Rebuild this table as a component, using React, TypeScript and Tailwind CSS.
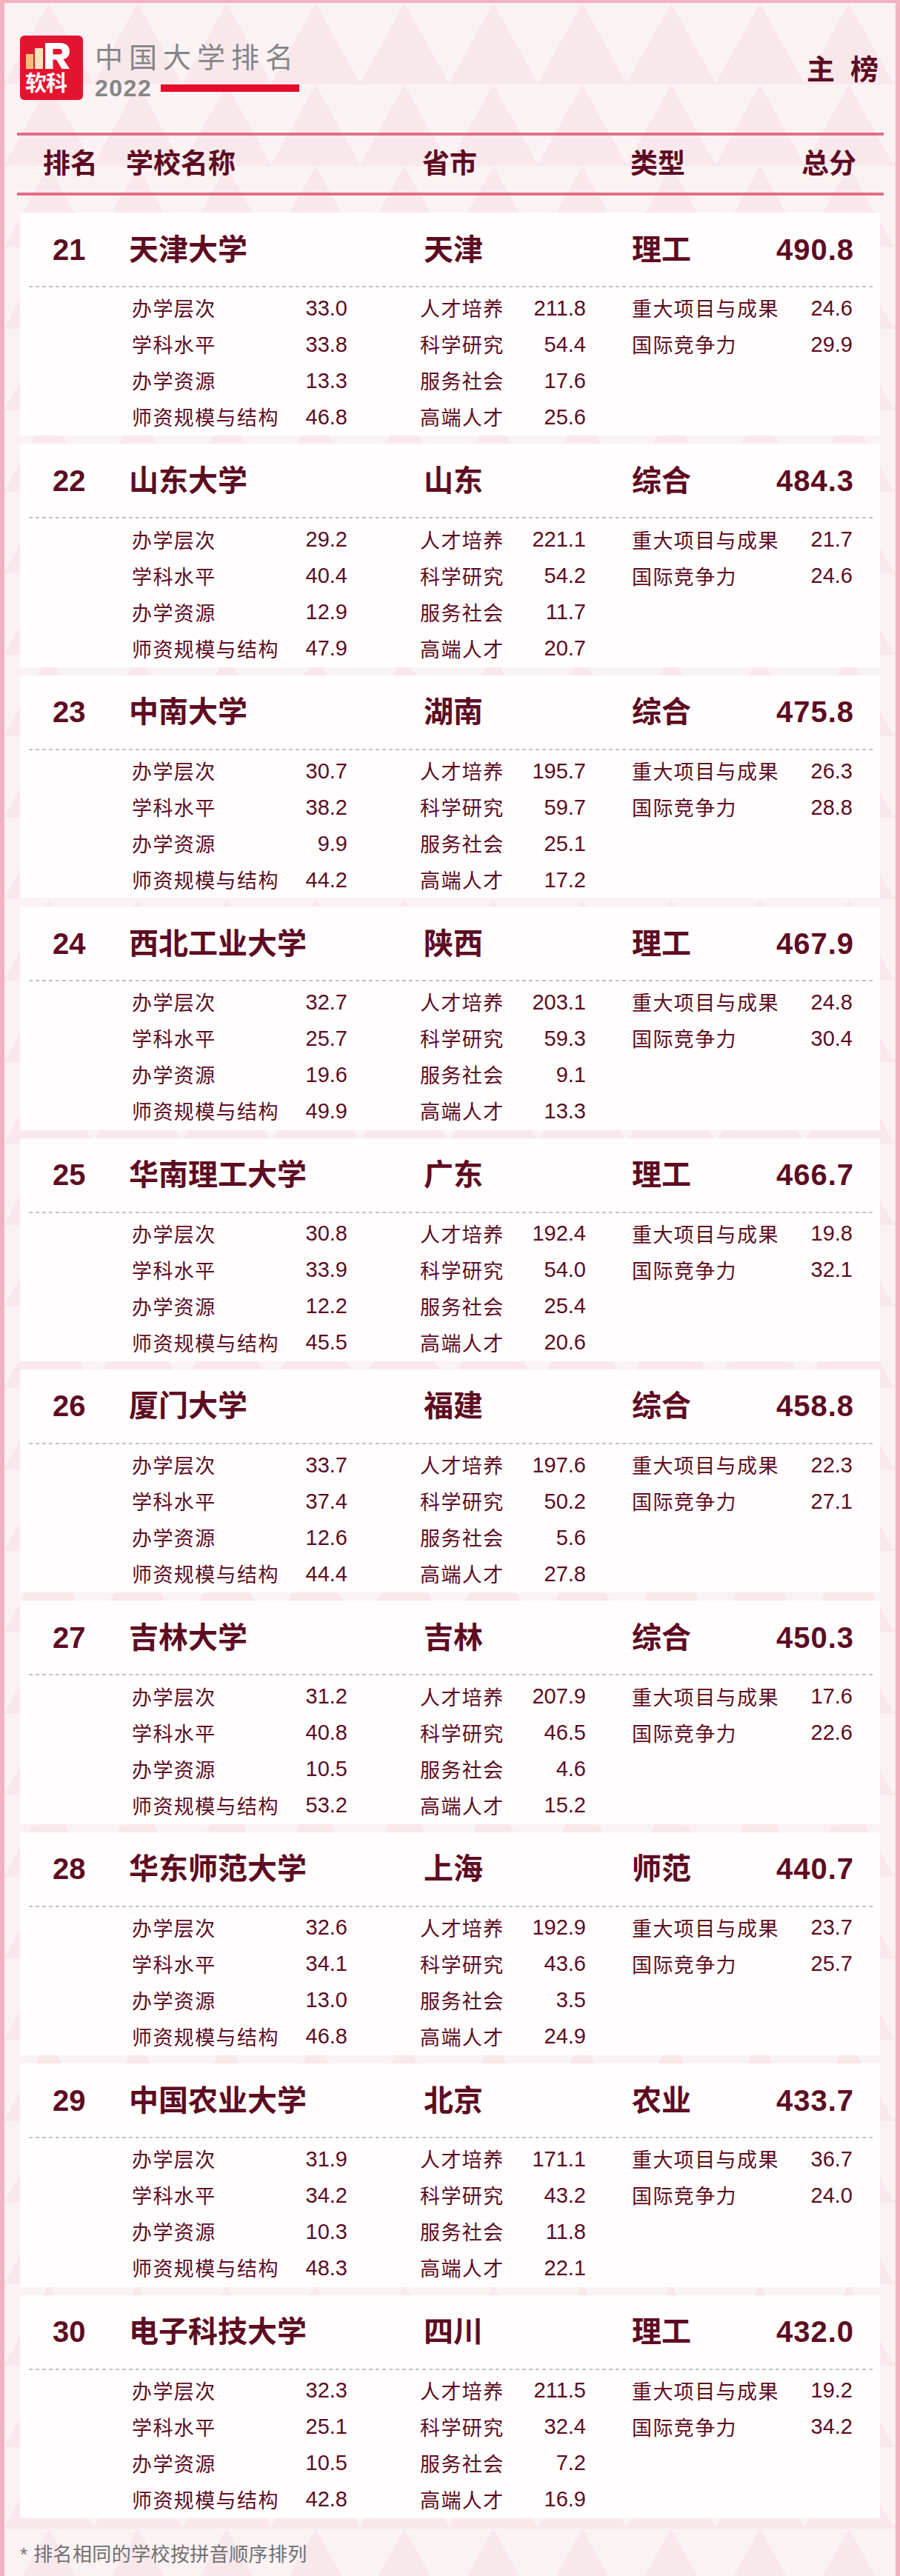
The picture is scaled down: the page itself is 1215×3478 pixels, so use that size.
import React from "react";

type Uni = {
  rank: number;
  name: string;
  prov: string;
  type: string;
  score: string;
  a: string[];
  b: string[];
  c: string[];
};

const L1 = ["办学层次", "学科水平", "办学资源", "师资规模与结构"];
const L2 = ["人才培养", "科学研究", "服务社会", "高端人才"];
const L3 = ["重大项目与成果", "国际竞争力"];

const DATA: Uni[] = [
  { rank: 21, name: "天津大学", prov: "天津", type: "理工", score: "490.8", a: ["33.0", "33.8", "13.3", "46.8"], b: ["211.8", "54.4", "17.6", "25.6"], c: ["24.6", "29.9"] },
  { rank: 22, name: "山东大学", prov: "山东", type: "综合", score: "484.3", a: ["29.2", "40.4", "12.9", "47.9"], b: ["221.1", "54.2", "11.7", "20.7"], c: ["21.7", "24.6"] },
  { rank: 23, name: "中南大学", prov: "湖南", type: "综合", score: "475.8", a: ["30.7", "38.2", "9.9", "44.2"], b: ["195.7", "59.7", "25.1", "17.2"], c: ["26.3", "28.8"] },
  { rank: 24, name: "西北工业大学", prov: "陕西", type: "理工", score: "467.9", a: ["32.7", "25.7", "19.6", "49.9"], b: ["203.1", "59.3", "9.1", "13.3"], c: ["24.8", "30.4"] },
  { rank: 25, name: "华南理工大学", prov: "广东", type: "理工", score: "466.7", a: ["30.8", "33.9", "12.2", "45.5"], b: ["192.4", "54.0", "25.4", "20.6"], c: ["19.8", "32.1"] },
  { rank: 26, name: "厦门大学", prov: "福建", type: "综合", score: "458.8", a: ["33.7", "37.4", "12.6", "44.4"], b: ["197.6", "50.2", "5.6", "27.8"], c: ["22.3", "27.1"] },
  { rank: 27, name: "吉林大学", prov: "吉林", type: "综合", score: "450.3", a: ["31.2", "40.8", "10.5", "53.2"], b: ["207.9", "46.5", "4.6", "15.2"], c: ["17.6", "22.6"] },
  { rank: 28, name: "华东师范大学", prov: "上海", type: "师范", score: "440.7", a: ["32.6", "34.1", "13.0", "46.8"], b: ["192.9", "43.6", "3.5", "24.9"], c: ["23.7", "25.7"] },
  { rank: 29, name: "中国农业大学", prov: "北京", type: "农业", score: "433.7", a: ["31.9", "34.2", "10.3", "48.3"], b: ["171.1", "43.2", "11.8", "22.1"], c: ["36.7", "24.0"] },
  { rank: 30, name: "电子科技大学", prov: "四川", type: "理工", score: "432.0", a: ["32.3", "25.1", "10.5", "42.8"], b: ["211.5", "32.4", "7.2", "16.9"], c: ["19.2", "34.2"] },
];

function Logo() {
  return (
    <svg width="85" height="87" viewBox="0 0 85 87" className="shrink-0">
      <rect x="0" y="0" width="85" height="87" rx="6" fill="#e3142f" />
      <rect x="8" y="25" width="10" height="20" fill="#f5c07d" />
      <rect x="20" y="17" width="11" height="28" fill="#fde3bb" />
      <path
        fill="#ffffff"
        fillRule="evenodd"
        d="M34 10 H54 C63 10 67 15 67 21.5 C67 27 63.5 31 58.5 32 L67 45 H56.5 L49 32.5 H44.5 V45 H34 Z M44.5 18 V25.5 H53 C55.5 25.5 57 24 57 21.8 C57 19.5 55.5 18 53 18 Z"
      />
      <text
        x="7"
        y="75"
        fill="#ffffff"
        fontSize="29"
        fontWeight="700"
        fontFamily="'Noto Sans CJK SC', sans-serif"
        letterSpacing="-1"
      >
        软科
      </text>
    </svg>
  );
}

function SubCol({ labels, values, width, ml }: { labels: string[]; values: string[]; width: string; ml: string }) {
  return (
    <div className={`flex flex-col ${width} ${ml}`}>
      {labels.map((l, i) => (
        <div key={l} className="h-[49px] flex items-center justify-between">
          <span className="text-[27px] tracking-[1.4px] font-['Noto_Sans_CJK_SC',sans-serif]">{l}</span>
          <span className="text-[29px]">{values[i]}</span>
        </div>
      ))}
    </div>
  );
}

function Card({ u }: { u: Uni }) {
  return (
    <div className="bg-[#fffdfd] h-[301.4px] flex flex-col text-[#5e0c22]">
      <div className="h-[99px] flex items-center font-bold pl-[44px] pr-[35px]">
        <span className="w-[103px] text-[40px]">{u.rank}</span>
        <span className="w-[398px] text-[40px]">{u.name}</span>
        <span className="w-[281px] text-[40px]">{u.prov}</span>
        <span className="flex-1 text-[40px]">{u.type}</span>
        <span className="text-[40px] tracking-[1px]">{u.score}</span>
      </div>
      <div className="h-[2px] ml-[12px] mr-[10px] bg-[repeating-linear-gradient(90deg,#c3c3c3_0_5px,transparent_5px_9px)]" />
      <div className="pt-[4px] pl-[151px] flex">
        <SubCol labels={L1} values={u.a} width="w-[291px]" ml="" />
        <SubCol labels={L2} values={u.b} width="w-[224px]" ml="ml-[98px]" />
        <SubCol labels={L3} values={u.c} width="w-[298px]" ml="ml-[62px]" />
      </div>
    </div>
  );
}

export default function App() {
  return (
    <div className="w-[1215px] h-[3478px] overflow-hidden border-t-[4px] border-x-[6px] border-[#f2b2c0] bg-[#fbf2f4] bg-[image:conic-gradient(from_151deg_at_50%_0,#f8e8ec_58deg,transparent_0)] bg-size-[120px_110px] font-['Liberation_Sans','Noto_Sans_CJK_SC',sans-serif]">
      {/* header */}
      <div className="h-[175px] flex items-start pt-[44px] px-[21px]">
        <Logo />
        <div className="ml-[16px] flex flex-col">
          <div className="mt-[8px] text-[38px] leading-none tracking-[8px] text-[#858585] font-['Noto_Sans_CJK_SC',sans-serif]">
            中国大学排名
          </div>
          <div className="mt-[9px] flex items-center">
            <span className="text-[32px] leading-none font-bold tracking-[1.5px] text-[#858585]">2022</span>
            <span className="ml-[12px] w-[187px] h-[10px] bg-[#e50b2c]" />
          </div>
        </div>
        <div className="ml-auto mr-[2px] mt-[27px] text-[38px] leading-none font-bold text-[#5e0c22] flex">
          <span>主</span>
          <span className="ml-[21px]">榜</span>
        </div>
      </div>
      <div className="h-[4px] ml-[17px] mr-[16px] bg-[#df6e85]" />
      <div className="h-[77px] flex items-center pl-[52px] pr-[53px] text-[37px] font-bold text-[#5e0c22]">
        <span className="w-[112px]">排名</span>
        <span className="w-[400px]">学校名称</span>
        <span className="w-[281px]">省市</span>
        <span className="flex-1">类型</span>
        <span>总分</span>
      </div>
      <div className="h-[4px] ml-[17px] mr-[16px] bg-[#df6e85]" />
      <div className="mt-[23px] mx-[21px] flex flex-col gap-[11px]">
        {DATA.map((u) => (
          <Card key={u.rank} u={u} />
        ))}
      </div>
      <div className="mt-[30px] ml-[21px] text-[26px] tracking-[0.4px] text-[#707070]">* 排名相同的学校按拼音顺序排列</div>
    </div>
  );
}
